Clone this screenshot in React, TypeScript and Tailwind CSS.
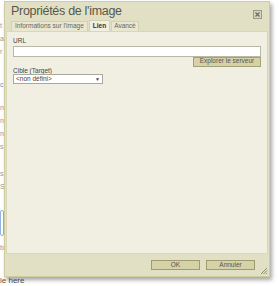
const font = { fontFamily: '"Liberation Sans", Arial, sans-serif' };

function CloseIcon() {
  return (
    <svg width="9" height="9" viewBox="0 0 9 9">
      <rect x="0.5" y="0.5" width="8" height="8" fill="#d6d5c0" stroke="#9a9a88" />
      <path d="M2.5 2.5 L6.5 6.5 M6.5 2.5 L2.5 6.5" stroke="#6a6a5c" strokeWidth="1.2" />
    </svg>
  );
}

function Grip() {
  return (
    <svg width="8" height="8" viewBox="0 0 8 8">
      <path d="M7 1 L1 7 M7 3.5 L3.5 7 M7 6 L6 7" stroke="#8d8b6a" strokeWidth="1" />
    </svg>
  );
}

export default function App() {
  return (
    <div
      className="relative w-[279px] h-[286px] bg-white overflow-hidden text-[#444]"
      style={font}
    >
      {/* page behind the dialog */}
      <div className="flex flex-col gap-[6px] pt-[22px] text-[7px] text-[#9a9a9a] leading-none">
        <span>t</span>
        <span>a</span>
        <span>r</span>
        <span className="mt-[20px] text-[#6b8fc7]">c</span>
        <span className="mt-[10px]">n</span>
        <span>n</span>
        <span>n</span>
        <span>s</span>
        <span className="mt-[14px]">s</span>
        <span>S</span>
        <div className="mt-[14px] w-[4px] h-[26px] border border-[#8fb3e0] rounded-[2px]" />
        <span className="mt-[2px]">b</span>
      </div>
      <div className="absolute left-0 bottom-[1px] text-[8px] text-[#555] leading-none">le here</div>

      {/* dialog */}
      <div className="absolute left-[4px] top-[1px] w-[266px] h-[276px] flex flex-col border border-[#cfcd9d] bg-[#e2e0c4] shadow-[2px_3px_4px_rgba(0,0,0,0.35)]">
        <div className="flex items-start justify-between pl-[6px] pr-[7px] pt-[2px] h-[18px]">
          <span className="text-[12.5px] leading-[15px] text-[#58584a] tracking-[-0.3px]">
            Propriétés de l&apos;image
          </span>
          <span className="mt-[6px]">
            <CloseIcon />
          </span>
        </div>
        <div className="flex items-end gap-[1px] pl-[6px] h-[11px] text-[6.5px] leading-none">
          <div className="h-[10px] px-[3px] flex items-center border border-b-0 border-[#d3d1b0] bg-[#e9e7cf] text-[#666]">
            Informations sur l&apos;image
          </div>
          <div className="h-[11px] px-[3px] flex items-center border border-b-0 border-[#d3d1b0] bg-[#f0efe2] text-[#333] font-bold">
            Lien
          </div>
          <div className="h-[10px] px-[2px] flex items-center border border-b-0 border-[#d3d1b0] bg-[#e9e7cf] text-[#666]">
            Avancé
          </div>
        </div>
        <div className="flex-1 mx-[1px] bg-[#f0efe2] border border-[#d9d7bb] px-[6px] pt-[6px] flex flex-col text-[6.5px] leading-none text-[#444]">
          <span>URL</span>
          <div className="mt-[1px] h-[11px] bg-white border border-[#b9b8a4]" />
          <div className="flex justify-end">
            <div className="w-[68px] h-[10px] bg-[#d4d2a6] border border-[#a3a17a] flex items-center justify-center text-[#555]">
              Explorer le serveur
            </div>
          </div>
          <span className="mt-[1px]">Cible (Target)</span>
          <div className="w-[90px] h-[10px] bg-white border border-[#a9a89a] flex items-center justify-between px-[2px]">
            <span>&lt;non défini&gt;</span>
            <span className="text-[5px]">▼</span>
          </div>
        </div>
        <div className="relative h-[22px] flex items-center justify-end gap-[6px] pr-[14px]">
          <div className="w-[49px] h-[10px] bg-[#d4d2a6] border border-[#9d9b70] flex items-center justify-center text-[6.5px] leading-none text-[#555]">
            OK
          </div>
          <div className="w-[49px] h-[10px] bg-[#d4d2a6] border border-[#9d9b70] flex items-center justify-center text-[6.5px] leading-none text-[#555]">
            Annuler
          </div>
          <span className="absolute right-[1px] bottom-[1px] leading-none">
            <Grip />
          </span>
        </div>
      </div>
    </div>
  );
}
